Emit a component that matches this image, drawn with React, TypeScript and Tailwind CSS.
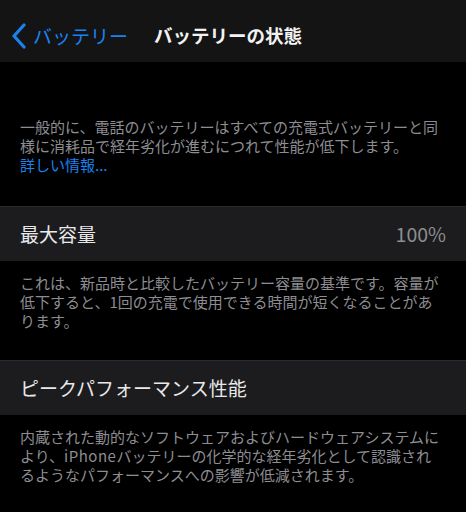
const font = { fontFamily: '"Noto Sans CJK JP", "Noto Sans", sans-serif' };

function Footnote({ children }: { children: React.ReactNode }) {
  return (
    <p className="pl-5 pr-[24px] pt-[12px] pb-[30px] text-[15px] leading-[19px] text-[#8d8d92]">
      {children}
    </p>
  );
}

function Row({ label, value }: { label: string; value?: string }) {
  return (
    <div className="flex h-[55px] items-center justify-between border-t border-[#2a2a2c] bg-[#1c1c1e] px-5">
      <span className="text-[19px] text-[#e9e9eb]">{label}</span>
      {value && <span className="text-[19.5px] text-[#8d8d92]">{value}</span>}
    </div>
  );
}

export default function App() {
  return (
    <div className="h-[512px] w-[466px] overflow-hidden bg-black" style={font}>
      <header className="flex h-[62px] items-center bg-[#141414] pt-[10px]">
        <div className="flex items-center pl-[11px] text-[#1a82f0]">
          <svg width="16" height="26" viewBox="0 0 16 26" fill="none">
            <path d="M13 2 L3 13 L13 24" stroke="currentColor" strokeWidth="3.2" strokeLinecap="round" strokeLinejoin="round" />
          </svg>
          <span className="ml-[6px] text-[19px]">バッテリー</span>
        </div>
        <h1 className="ml-[26px] text-[18.5px] font-bold text-[#f2f2f2]">バッテリーの状態</h1>
      </header>

      <section className="pl-5 pr-[24px] pt-[55px] pb-[32px] text-[15px] leading-[19px] text-[#8d8d92]">
        <p>一般的に、電話のバッテリーはすべての充電式バッテリーと同様に消耗品で経年劣化が進むにつれて性能が低下します。</p>
        <p className="text-[#1a82f0]">詳しい情報...</p>
      </section>

      <Row label="最大容量" value="100%" />
      <Footnote>
        これは、新品時と比較したバッテリー容量の基準です。容量が低下すると、1回の充電で使用できる時間が短くなることがあります。
      </Footnote>

      <Row label="ピークパフォーマンス性能" />
      <Footnote>
        内蔵された動的なソフトウェアおよびハードウェアシステムにより、<span className="tracking-[0.5px]">iPhone</span>バッテリーの化学的な経年劣化として認識されるようなパフォーマンスへの影響が低減されます。
      </Footnote>
    </div>
  );
}
